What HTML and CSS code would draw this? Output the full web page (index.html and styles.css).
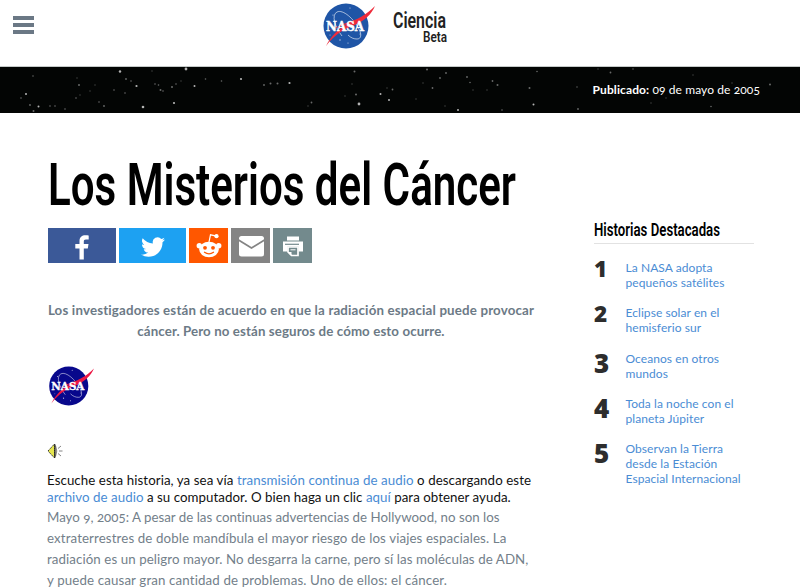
FILE: index.html
```html
<!DOCTYPE html>
<html lang="es">
<head>
<meta charset="utf-8">
<title>Los Misterios del Cáncer</title>
<link rel="stylesheet" href="styles.css">
</head>
<body>
<svg class="defs" width="0" height="0" aria-hidden="true">
  <symbol id="meatball" viewBox="0 0 54 46">
    <circle class="disc" cx="25" cy="23" r="22.5"/>
    <g fill="#fff" opacity=".75"><circle cx="12" cy="12" r=".6"/><circle cx="29" cy="5" r=".6"/><circle cx="39" cy="31" r=".6"/><circle cx="19" cy="37" r=".7"/><circle cx="27" cy="40" r=".6"/><circle cx="9" cy="32" r=".5"/></g>
    <path d="M21 33C14 24 10 12 16 9c6-3 17 7 22 17 3 6 2 10-2 10-3 0-6-1-9-4" fill="none" stroke="#fff" stroke-width=".8" opacity=".75"/>
    <path class="wing" d="M0 29c9-1 17-6 25-9 11-3 20-8 29-17-4 9-10 14-20 19C23 26 14 31 5 43c5-10 13-18 22-22-9 2-17 7-27 8Z"/>
    <text x="5" y="28" textLength="38" lengthAdjust="spacingAndGlyphs">NASA</text>
  </symbol>
</svg>
<header class="top">
  <button class="menu" aria-label="Menú"><i></i><i></i><i></i></button>
  <a class="brand">
    <svg class="logo" width="54" height="46"><use href="#meatball"/></svg>
    <svg class="brand-name" width="60" height="48"><text class="fjalla t1" x="0" y="25" textLength="53" lengthAdjust="spacingAndGlyphs">Ciencia</text><text class="fjalla t2" x="30" y="39" textLength="24" lengthAdjust="spacingAndGlyphs">Beta</text></svg>
  </a>
</header>
<div class="band">
  <svg class="stars" width="800" height="46" fill="#fff">
    <g opacity=".7"><circle cx="120" cy="4.500" r="1.200"/><circle cx="186" cy="2" r="1.400"/><circle cx="143" cy="40" r="1.300"/><circle cx="174" cy="36" r="1.100"/><circle cx="241" cy="12" r="1.100"/><circle cx="359" cy="37" r="1.400"/><circle cx="136.500" cy="19" r="1.100"/><circle cx="26" cy="27" r="1"/><circle cx="38.500" cy="39.500" r="1"/><circle cx="289.500" cy="16" r="1.100"/><circle cx="194.500" cy="19" r="1"/><circle cx="380.500" cy="27" r="1"/><circle cx="389" cy="33" r="1"/><circle cx="533.500" cy="37.500" r="1"/><circle cx="458" cy="43" r="1"/></g>
    <g opacity=".4"><circle cx="79" cy="18" r="1"/><circle cx="21" cy="31" r=".8"/><circle cx="30" cy="38" r=".9"/><circle cx="33.500" cy="44" r="1"/><circle cx="50" cy="39" r=".8"/><circle cx="55" cy="39" r=".8"/><circle cx="65" cy="42" r=".8"/><circle cx="76" cy="31" r=".8"/><circle cx="99" cy="35" r=".8"/><circle cx="104" cy="39" r=".9"/><circle cx="114" cy="23" r=".8"/><circle cx="125" cy="26" r=".8"/><circle cx="126" cy="12" r=".9"/><circle cx="131" cy="14" r=".8"/><circle cx="155" cy="17" r=".8"/><circle cx="158.500" cy="18" r=".8"/><circle cx="160.500" cy="23" r="1"/><circle cx="163" cy="24" r=".8"/><circle cx="172" cy="20" r="1"/><circle cx="176" cy="17" r=".8"/><circle cx="205.500" cy="12" r=".8"/><circle cx="221.500" cy="14" r=".8"/><circle cx="264" cy="18" r=".9"/><circle cx="270.500" cy="16.500" r="1"/><circle cx="277.500" cy="16.500" r="1"/><circle cx="354.500" cy="4.500" r="1"/><circle cx="427" cy="2.500" r="1"/><circle cx="440" cy="11" r=".9"/><circle cx="446" cy="6" r=".9"/><circle cx="467" cy="10" r=".9"/><circle cx="492.500" cy="14" r=".9"/><circle cx="497.500" cy="18" r="1"/><circle cx="529.500" cy="21" r="1"/><circle cx="311.500" cy="35.500" r=".9"/><circle cx="356" cy="27.500" r="1"/><circle cx="392.500" cy="22.500" r=".9"/><circle cx="432.500" cy="21" r=".9"/><circle cx="470" cy="15.500" r=".8"/><circle cx="502" cy="43" r=".8"/><circle cx="610.500" cy="5.500" r=".9"/><circle cx="578" cy="42" r=".9"/><circle cx="770" cy="17.500" r="1"/><circle cx="577" cy="20" r=".7"/><circle cx="711" cy="39.500" r=".8"/><circle cx="537" cy="4.500" r=".8"/></g>
    <g opacity=".22"><circle cx="90" cy="24" r=".8"/><circle cx="80" cy="28" r=".8"/><circle cx="95" cy="18" r=".8"/><circle cx="33" cy="9" r="1"/><circle cx="77" cy="11" r=".8"/><circle cx="152" cy="4" r=".8"/><circle cx="181" cy="14" r=".8"/><circle cx="308" cy="39" r=".8"/><circle cx="345" cy="29" r=".8"/><circle cx="352" cy="17" r=".8"/><circle cx="387" cy="21" r=".8"/><circle cx="416" cy="32" r=".8"/><circle cx="423" cy="16" r=".8"/><circle cx="445" cy="39" r=".8"/><circle cx="473" cy="23" r=".8"/><circle cx="487" cy="23" r=".8"/><circle cx="598" cy="2" r=".8"/><circle cx="633" cy="2" r=".9"/><circle cx="693" cy="8" r=".8"/><circle cx="732" cy="16" r=".8"/><circle cx="651" cy="36" r=".8"/><circle cx="666" cy="31" r=".8"/></g>
  </svg>
  <p><b>Publicado:</b> 09 de mayo de 2005</p>
</div>
<main class="page">
  <article class="story">
    <h1><svg width="490" height="72"><text class="fjalla" x="1" y="51.5" textLength="468" lengthAdjust="spacingAndGlyphs">Los Misterios del Cáncer</text></svg></h1>
    <div class="share">
      <a class="wide fb"><svg width="32" height="32" viewBox="0 0 32 32"><path d="M17.800 29.500V18.500h4l.7-4.500h-4.700v-2.400c0-1.300.5-2.200 2.200-2.200H22.700V5.500C22.300 5.400 20.900 5.300 19.400 5.300c-3.400 0-5.900 2-5.900 5.800V14H9.300v4.500h4.200v11z"/></svg></a>
      <a class="wide tw"><svg width="32" height="32" viewBox="0 0 32 32"><path transform="translate(1 1)" d="M28 8.600a9.900 9.900 0 0 1-2.800.8 4.900 4.900 0 0 0 2.200-2.700 9.900 9.900 0 0 1-3.100 1.200 4.900 4.900 0 0 0-8.400 4.500A14 14 0 0 1 5.700 7.200a4.900 4.900 0 0 0 1.500 6.600 4.900 4.900 0 0 1-2.200-.6v.1a4.900 4.900 0 0 0 3.900 4.800 4.900 4.900 0 0 1-2.200.1 4.900 4.900 0 0 0 4.600 3.400A9.900 9.900 0 0 1 4 23.600 13.900 13.900 0 0 0 11.500 25.800c9.100 0 14-7.500 14-14v-.6A10 10 0 0 0 28 8.600Z"/></svg></a>
      <a class="rd"><svg width="32" height="32" viewBox="0 0 32 32"><ellipse cx="16" cy="19.500" rx="9.800" ry="7.800"/><circle cx="6.300" cy="15.800" r="2.700"/><circle cx="25.700" cy="15.800" r="2.700"/><circle cx="23.500" cy="6.200" r="2.100"/><path d="M16 12l1.500-7.200 5 1.100" fill="none" stroke="#fff" stroke-width="1.200"/><g fill="#ff5700"><circle cx="12" cy="17.800" r="1.900"/><circle cx="20" cy="17.800" r="1.900"/></g><path d="M11.500 22.300q4.500 3.200 9 0" fill="none" stroke="#ff5700" stroke-width="1.300" stroke-linecap="round"/></svg></a>
      <a class="em"><svg width="32" height="32" viewBox="0 0 32 32"><rect x="4" y="6" width="25" height="20.500" rx="2.500"/><path d="M3.500 10 16.500 18 29.500 10" fill="none" stroke="#848484" stroke-width="1.700"/></svg></a>
      <a class="pr"><svg width="32" height="32" viewBox="0 0 32 32"><path d="M10 6.500h12v4H10zM6 11.500h20v10h-4.500v-5h-11v5H6z"/><path d="M11 17h10v8.500h-6.500L11 22z" fill="#738a8d" stroke="#fff" stroke-width="1.700"/><path d="M11 22h3.500v3.500z"/><path d="M13.500 19.800h5" stroke="#fff"/><path d="M8 14.300h14" stroke="#738a8d" stroke-width="1.200"/></svg></a>
    </div>
    <p class="lead"><span class="l1">Los investigadores están de acuerdo en que la radiación espacial puede provocar</span><span class="l2">cáncer. Pero no están seguros de cómo esto ocurre.</span></p>
    <svg class="logo dark" width="47" height="40"><use href="#meatball"/></svg>
    <svg class="sound" width="16" height="16" viewBox="0 0 16 16"><path d="M1 8 7.500 1v14z" fill="#e6e64e" stroke="#222" stroke-width=".9" stroke-dasharray="1.500 .7"/><path d="M7.800 1v14" stroke="#222" stroke-width="1"/><path d="M8.500 2.500q2.500 5.500 0 11z" fill="#e8e0ec" stroke="#554" stroke-width=".7"/><path d="M11 5.500l3-2.500M12 8h3.500M11 10.500l3 2.500" stroke="#777" stroke-width=".9"/></svg>
    <p class="audio"><span class="a1">Escuche esta historia, ya sea vía <a>transmisión continua de audio</a> o descargando este</span><span class="a2"><a>archivo de audio</a> a su computador. O bien haga un clic <a>aquí</a> para obtener ayuda.</span></p>
    <p class="body"><span class="b1">Mayo 9, 2005: A pesar de las continuas advertencias de Hollywood, no son los</span><span class="b2">extraterrestres de doble mandíbula el mayor riesgo de los viajes espaciales. La</span><span class="b3">radiación es un peligro mayor. No desgarra la carne, pero sí las moléculas de ADN,</span><span class="b4">y puede causar gran cantidad de problemas. Uno de ellos: el cáncer.</span></p>
  </article>
  <aside class="featured">
    <h2><svg width="160" height="26"><text class="fjalla" x="0" y="17" textLength="126" lengthAdjust="spacingAndGlyphs">Historias Destacadas</text></svg></h2>
    <ol>
      <li><b>1</b><a>La NASA adopta<br>pequeños satélites</a></li>
      <li><b>2</b><a>Eclipse solar en el<br>hemisferio sur</a></li>
      <li><b class="tall">3</b><a>Oceanos en otros<br>mundos</a></li>
      <li><b class="tall">4</b><a>Toda la noche con el<br>planeta Júpiter</a></li>
      <li><b class="tall">5</b><a>Observan la Tierra<br>desde la Estación<br>Espacial Internacional</a></li>
    </ol>
  </aside>
</main>
</body>
</html>
```
FILE: styles.css
```css
* { box-sizing: border-box; }
body { margin: 0; height: 588px; overflow: hidden; background: #fff; font-family: Lato, "Open Sans", sans-serif; font-size: 13.3px; font-variant-numeric: oldstyle-nums; font-variant-ligatures: none; }
p, h1, h2, ol { margin: 0; padding: 0; }
svg { display: block; overflow: visible; }
.defs { position: absolute; }
.fjalla { font-family: Roboto, sans-serif; font-weight: 600; }
a { color: #4a8cd4; }
.top { display: flex; height: 67px; padding-left: 13px; border-bottom: 1px solid #c5cac9; }
.menu { display: flex; flex-direction: column; gap: 3px; width: 21px; height: 20px; margin-top: 16px; padding: 0; border: 0; background: none; }
.menu i { height: 4px; width: 21px; background: #6b7885; }
.brand { display: flex; margin: 3px 0 0 287px; }
.logo { --blue: #1f55a6; --red: #ee2b3a; font: 700 12.5px "DejaVu Serif", serif; }
.logo.dark { --blue: #08088c; --red: #ec1845; margin: 24px 0 0; }
.disc { fill: var(--blue); }
.wing { fill: var(--red); }
#meatball text { fill: #fff; stroke: #fff; stroke-width: .4; }
.brand-name { margin-left: 18px; fill: #222; }
.t1 { font-size: 22px; font-weight: 600; }
.t2 { font-size: 15px; font-weight: 600; }
.band { position: relative; display: flex; align-items: center; justify-content: flex-end; height: 46px; padding-right: 40px; background: #030504; color: #fff; font-size: 12px; letter-spacing: .1px; }
.band p { position: relative; margin-top: -2px; }
.stars { position: absolute; inset: 0; }
.page { display: flex; }
.story { width: 488px; margin-left: 47px; padding-top: 40px; }
h1 { height: 75px; font-size: 58.5px; }
.share { display: flex; gap: 3px; padding-left: 1px; }
.share a { display: flex; align-items: center; justify-content: center; width: 39px; height: 35px; fill: #fff; }
.share .wide { width: 67.5px; }
.fb { background: #3b5998; }
.tw { background: #1da1f2; }
.rd { background: #ff5700; }
.em { background: #848484; }
.pr { background: #738a8d; }
.lead { margin-top: 37px; color: #6c7a86; font-weight: 700; line-height: 21px; text-align: center; }
p span { display: block; white-space: nowrap; }
.l1 { letter-spacing: .17px; }
.l2 { letter-spacing: .1px; }
.a1 { letter-spacing: .07px; }
.a2 { letter-spacing: .04px; }
.b1 { letter-spacing: .01px; }
.b2 { letter-spacing: .11px; }
.b3 { letter-spacing: .08px; }
.b4 { letter-spacing: .13px; }
.sound { margin-top: 37px; }
.audio { margin-top: 13px; line-height: 17px; color: #111; }
.body { margin-top: 1px; line-height: 21px; color: #73808a; }
.featured { width: 160px; margin: 106px 0 0 59px; }
.featured h2 { width: 160px; height: 25px; border-bottom: 1px solid #e2e2e2; font-size: 18px; }
.featured ol { list-style: none; padding-top: 16px; }
.featured li { display: flex; margin-bottom: 15.3px; font-size: 12px; line-height: 15px; letter-spacing: .07px; }
.featured b { width: 31.5px; color: #2d2d2d; font: 800 22.5px/18px "Open Sans", sans-serif; }
.featured .tall { font-size: 26px; line-height: 24px; height: 24px; }
```
